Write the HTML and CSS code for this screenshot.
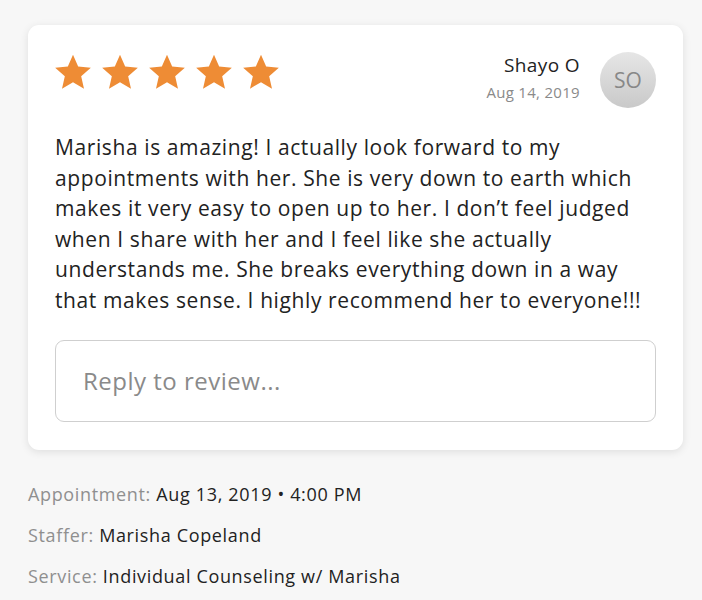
FILE: index.html
```html
<!DOCTYPE html>
<html>
<head>
<meta charset="utf-8">
<link rel="stylesheet" href="styles.css">
</head>
<body>
<div class="page">
  <div class="card">
    <div class="head">
      <div class="stars">
        <svg class="star" viewBox="0 0 24 24"><path d="M12 1.6l3.1 7.1 7.6.7-5.8 5.1 1.7 7.5L12 18.1 5.4 22l1.7-7.5L1.3 9.4l7.6-.7z"/></svg>
        <svg class="star" viewBox="0 0 24 24"><path d="M12 1.6l3.1 7.1 7.6.7-5.8 5.1 1.7 7.5L12 18.1 5.4 22l1.7-7.5L1.3 9.4l7.6-.7z"/></svg>
        <svg class="star" viewBox="0 0 24 24"><path d="M12 1.6l3.1 7.1 7.6.7-5.8 5.1 1.7 7.5L12 18.1 5.4 22l1.7-7.5L1.3 9.4l7.6-.7z"/></svg>
        <svg class="star" viewBox="0 0 24 24"><path d="M12 1.6l3.1 7.1 7.6.7-5.8 5.1 1.7 7.5L12 18.1 5.4 22l1.7-7.5L1.3 9.4l7.6-.7z"/></svg>
        <svg class="star" viewBox="0 0 24 24"><path d="M12 1.6l3.1 7.1 7.6.7-5.8 5.1 1.7 7.5L12 18.1 5.4 22l1.7-7.5L1.3 9.4l7.6-.7z"/></svg>
      </div>
      <div class="author">
        <div class="who">
          <div class="name">Shayo O</div>
          <div class="date">Aug 14, 2019</div>
        </div>
        <div class="avatar">SO</div>
      </div>
    </div>
    <p class="text">Marisha is amazing! I actually look forward to my appointments with her. She is very down to earth which makes it very easy to open up to her. I don’t feel judged when I share with her and I feel like she actually understands me. She breaks everything down in a way that makes sense. I highly recommend her to everyone!!!</p>
    <div class="reply">Reply to review...</div>
  </div>
  <div class="meta">
    <div class="row"><span class="label">Appointment:</span> <span class="val">Aug 13, 2019 • 4:00 PM</span></div>
    <div class="row"><span class="label">Staffer:</span> <span class="val">Marisha Copeland</span></div>
    <div class="row"><span class="label">Service:</span> <span class="val">Individual Counseling w/ Marisha</span></div>
  </div>
</div>
</body>
</html>
```
FILE: styles.css
```css
html, body {
  margin: 0;
  padding: 0;
  background: #f7f7f7;
  font-family: "Open Sans", "Lato", sans-serif;
  color: #222;
}
.page {
  padding: 25px 19px 0 28px;
}
.card {
  background: #fff;
  border-radius: 11px;
  box-shadow: 0 2px 8px rgba(0,0,0,0.10);
  padding: 27px 27px 27px 27px;
  height: 425px;
  box-sizing: border-box;
}
.head {
  display: flex;
  justify-content: space-between;
  align-items: flex-start;
}
.stars {
  display: flex;
  gap: 7px;
  margin-left: -2px;
}
.star {
  width: 40px;
  height: 40px;
  fill: #ee8c35;
}
.author {
  display: flex;
  align-items: flex-start;
  gap: 20px;
}
.who {
  text-align: right;
}
.name {
  font-size: 19px;
  line-height: 26px;
  color: #222;
  letter-spacing: 0.4px;
}
.date {
  font-size: 15px;
  line-height: 20px;
  color: #8a8a8a;
  margin-top: 4px;
  letter-spacing: 0.3px;
}
.avatar {
  width: 56px;
  height: 56px;
  border-radius: 50%;
  background: linear-gradient(#e6e6e6, #c9c9c9);
  color: #888;
  font-size: 21px;
  display: flex;
  align-items: center;
  justify-content: center;
}
.text {
  margin: 24px 0 0 0;
  font-size: 21px;
  line-height: 30.6px;
  letter-spacing: 0.6px;
  color: #222;
}
.reply {
  margin-top: 24px;
  height: 82px;
  box-sizing: border-box;
  border: 1px solid #cfcfcf;
  border-radius: 9px;
  padding: 0 27px;
  display: flex;
  align-items: center;
  font-size: 24px;
  letter-spacing: 0.5px;
  color: #8a8a8a;
}
.meta {
  padding-top: 24px;
}
.row {
  font-size: 18px;
  line-height: 41px;
  letter-spacing: 0.65px;
}
.label {
  color: #8f8f8f;
}
.val {
  color: #222;
}
```
